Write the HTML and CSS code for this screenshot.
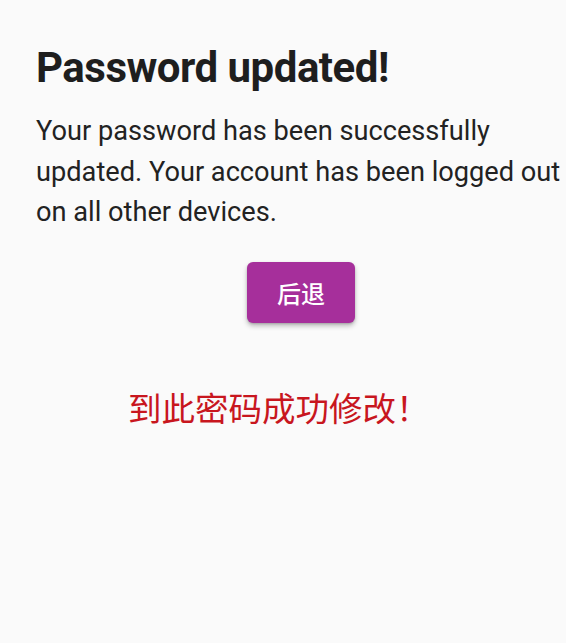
FILE: index.html
```html
<!DOCTYPE html>
<html lang="zh">
<head>
<meta charset="utf-8">
<link rel="stylesheet" href="styles.css">
</head>
<body>
<main class="page">
  <h1 class="title">Password updated!</h1>
  <p class="message">Your password has been successfully updated. Your account has been logged out on all other devices.</p>
  <div class="actions">
    <button class="back-btn" type="button">后退</button>
  </div>
  <p class="note">到此密码成功修改！</p>
</main>
</body>
</html>
```
FILE: styles.css
```css
html, body {
  margin: 0;
  padding: 0;
  background: #fafafa;
}
body {
  width: 566px;
  height: 643px;
  overflow: hidden;
  font-family: Roboto, "Noto Sans CJK SC", sans-serif;
  color: #202020;
}
.page {
  width: 530px;
  padding: 38px 0 0 36px;
}
.title {
  margin: 0;
  font-size: 42px;
  line-height: 60px;
  font-weight: 700;
  letter-spacing: -0.5px;
  color: #1e1e1e;
}
.message {
  margin: 13px 0 0;
  font-size: 27.2px;
  line-height: 40.5px;
  font-weight: 400;
  color: #222;
}
.actions {
  display: flex;
  justify-content: center;
  margin-top: 29px;
}
.back-btn {
  width: 108px;
  height: 61px;
  border: none;
  border-radius: 6px;
  background: #a62f9b;
  color: #fff;
  font-family: "Noto Sans CJK SC", sans-serif;
  font-size: 24px;
  font-weight: 500;
  box-shadow: 0 3px 5px rgba(0,0,0,0.25), 0 1px 2px rgba(0,0,0,0.15);
}
.note {
  margin: 59px 0 0 92px;
  font-family: "Noto Sans CJK SC", sans-serif;
  font-size: 33.5px;
  line-height: 50px;
  color: #c8161e;
}
```
